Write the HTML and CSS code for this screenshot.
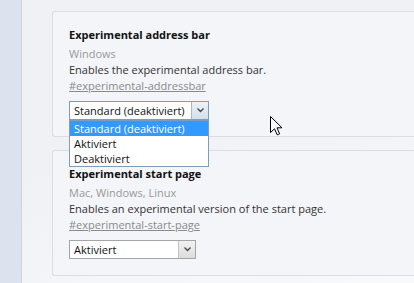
FILE: index.html
```html
<!DOCTYPE html>
<html lang="de">
<head>
  <meta charset="UTF-8" />
  <title>Flags</title>
  <link rel="stylesheet" href="styles.css">
</head>
<body>
  <div class="sidebar"></div>

  <div class="main">
    <div class="card">
      <div class="title">Experimental address bar</div>
      <div class="platforms">Windows</div>
      <div class="desc">Enables the experimental address bar.</div>
      <a class="link" href="#experimental-addressbar">#experimental-addressbar</a>
      <div class="select open">
        <span class="value">Standard (deaktiviert)</span>
        <span class="arrow"><svg width="7" height="5" viewBox="0 0 7 5"><polyline points="0.5,0.5 3.5,3.5 6.5,0.5" fill="none" stroke="#444" stroke-width="1.3"/></svg></span>
        <div class="options">
          <div class="option selected">Standard (deaktiviert)</div>
          <div class="option">Aktiviert</div>
          <div class="option">Deaktiviert</div>
        </div>
      </div>
    </div>

    <div class="card">
      <div class="title">Experimental start page</div>
      <div class="platforms">Mac, Windows, Linux</div>
      <div class="desc">Enables an experimental version of the start page.</div>
      <a class="link" href="#experimental-start-page">#experimental-start-page</a>
      <div class="select small">
        <span class="value">Aktiviert</span>
        <span class="arrow"><svg width="7" height="5" viewBox="0 0 7 5"><polyline points="0.5,0.5 3.5,3.5 6.5,0.5" fill="none" stroke="#444" stroke-width="1.3"/></svg></span>
      </div>
    </div>
  </div>

  <!-- mouse pointer -->
  <svg class="cursor" width="13" height="20" viewBox="0 0 13 20">
    <path d="M0.5 0.5 L0.5 16.5 L4.5 12.8 L7.2 18.8 L9.6 17.8 L7 11.8 L12 11.8 Z" fill="#fff" stroke="#000" stroke-width="1" stroke-linejoin="miter"/>
  </svg>
</body>
</html>
```

FILE: styles.css
```css
body {
  margin: 0;
  font-family: 'Segoe UI', 'Open Sans', sans-serif;
  font-size: 11px;
  display: flex;
  height: 283px;
  overflow: hidden;
  background: #f0f2f6;
}
.sidebar {
  width: 21px;
  flex-shrink: 0;
  background: #dce3ee;
  border-right: 1px solid #cdd4df;
}
.main {
  flex-grow: 1;
  padding: 11px 0 0 30px;
  background: linear-gradient(160deg, #eff1f5 40%, #f8f9fb 100%);
}
.card {
  border: 1px solid #d9dde4;
  border-right: none;
  border-radius: 3px 0 0 3px;
  padding: 15px 0 16px 16px;
  margin-bottom: 13px;
  background: #f3f5f8;
}
.title {
  font-weight: bold;
  color: #111;
  line-height: 16px;
  margin-bottom: 3px;
}
.platforms {
  color: #999;
  line-height: 16px;
}
.desc {
  color: #333;
  line-height: 16px;
}
.link {
  display: block;
  color: #8a8a8a;
  line-height: 16px;
  text-decoration: underline;
}
.select {
  position: relative;
  margin-top: 7px;
  width: 138px;
  height: 17px;
  border: 1px solid #a5a5a5;
  background: #fff;
  display: flex;
  align-items: center;
  color: #111;
}
.select.open {
  border-color: #7f9db9;
}
.select.small {
  width: 125px;
}
.value {
  flex-grow: 1;
  padding-left: 4px;
  line-height: 17px;
}
.arrow {
  width: 16px;
  height: 17px;
  display: flex;
  align-items: center;
  justify-content: center;
  background: linear-gradient(#f2f2f2, #dcdcdc);
  border-left: 1px solid #c4c4c4;
}
.open .arrow {
  background: linear-gradient(#eaf1f9, #d6dfea);
  border-left-color: #a8b8cc;
}
.options {
  position: absolute;
  left: -1px;
  top: 18px;
  width: 138px;
  border: 1px solid #7f9db9;
  background: #fff;
  z-index: 2;
}
.option {
  height: 15px;
  line-height: 15px;
  padding-left: 4px;
}
.option.selected {
  background: #3399ff;
  color: #fff;
}
.cursor {
  position: absolute;
  left: 270px;
  top: 116px;
}
```
